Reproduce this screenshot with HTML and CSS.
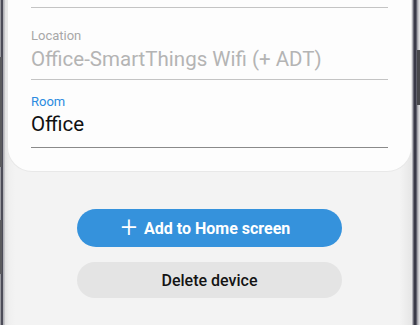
FILE: index.html
```html
<!DOCTYPE html>
<html>
<head>
<meta charset="utf-8">
<link rel="stylesheet" href="styles.css">
</head>
<body>
<div class="device">
  <div class="bezel bezel-left">
    <span class="side-btn side-btn-1"></span>
    <span class="side-btn side-btn-2"></span>
  </div>
  <div class="screen">
    <div class="card">
      <div class="field field-top"></div>
      <div class="field field-location">
        <div class="label">Location</div>
        <div class="value value-muted">Office-SmartThings Wifi (+ ADT)</div>
      </div>
      <div class="field field-room">
        <div class="label label-active">Room</div>
        <div class="value">Office</div>
      </div>
    </div>
    <div class="actions">
      <button class="btn btn-primary"><span class="plus">+</span>Add to Home screen</button>
      <button class="btn btn-secondary">Delete device</button>
    </div>
  </div>
  <div class="bezel bezel-right">
    <span class="side-btn side-btn-r"></span>
  </div>
</div>
</body>
</html>
```

FILE: styles.css
```css
html, body {
  margin: 0;
  padding: 0;
}
body {
  width: 420px;
  height: 325px;
  overflow: hidden;
  background: #f3f3f3;
  font-family: Roboto, "Liberation Sans", sans-serif;
}
.device {
  display: flex;
  height: 325px;
}
.bezel {
  position: relative;
  flex: none;
}
.bezel-left {
  width: 5px;
  background: linear-gradient(to right, #9a9aa0 0, #9a9aa0 1px, #4c4c58 1px, #4c4c58 3px, #a8a8ae 3px, #d0d0d2 5px);
}
.bezel-right {
  width: 8px;
  background: linear-gradient(to right, #c8c8cc 0, #9a9aa2 1px, #3a3a48 2px, #3a3a48 4px, #8a8a94 5px, #b8b8bc 6px, #e8e8ea 8px);
}
.side-btn {
  position: absolute;
  background: #5a5a5e;
}
.side-btn-1 {
  left: 0;
  top: 57px;
  width: 2px;
  height: 110px;
}
.side-btn-2 {
  left: 0;
  top: 220px;
  width: 2px;
  height: 54px;
}
.side-btn-r {
  right: 0;
  top: 50px;
  width: 3px;
  height: 55px;
  background: #48484c;
}
.screen {
  flex: 1;
  background: linear-gradient(to right, #e2e2e2 0, #efefef 4px, #f3f3f3 10px, #f3f3f3 calc(100% - 12px), #e6e6e6 100%);
}
.card {
  margin: 0 0 0 3px;
  width: 403px;
  background: #fdfdfd;
  border-radius: 0 0 24px 24px;
  box-shadow: 0 0 0 1px #e8e8e8;
  padding: 0 23px 23px;
  box-sizing: border-box;
}
.field-top {
  height: 7px;
  border-bottom: 1px solid #6aa6dc;
}
.field {
  border-bottom: 1px solid #c4c4c4;
}
.field-location {
  padding: 20px 0 8px;
}
.field-room {
  padding: 14px 0 11px;
  border-bottom-color: #8a8a8a;
}
.label {
  font-size: 13px;
  line-height: 16px;
  color: #a8a8a8;
}
.label-active {
  color: #2b8be0;
}
.value {
  margin-top: 3px;
  font-size: 20.5px;
  line-height: 24px;
  color: #111;
}
.field-room .value {
  margin-top: 2px;
}
.value-muted {
  color: #b4b4b4;
}
.actions {
  display: flex;
  flex-direction: column;
  align-items: center;
  gap: 15px;
  padding-top: 38px;
  margin-left: 2px;
}
.btn {
  width: 265px;
  border: none;
  border-radius: 19px;
  font-family: Roboto, "Liberation Sans", sans-serif;
  font-size: 16px;
  font-weight: 500;
  display: flex;
  align-items: center;
  justify-content: center;
  padding: 0;
}
.btn-primary {
  height: 38px;
  background: #3592dc;
  color: #fff;
  font-weight: 700;
  padding-right: 8px;
}
.plus {
  font-size: 29px;
  font-weight: 300;
  margin-right: 7px;
  line-height: 1;
  position: relative;
  top: -1px;
}
.btn-secondary {
  height: 36px;
  background: #e4e4e4;
  color: #141414;
}
```
